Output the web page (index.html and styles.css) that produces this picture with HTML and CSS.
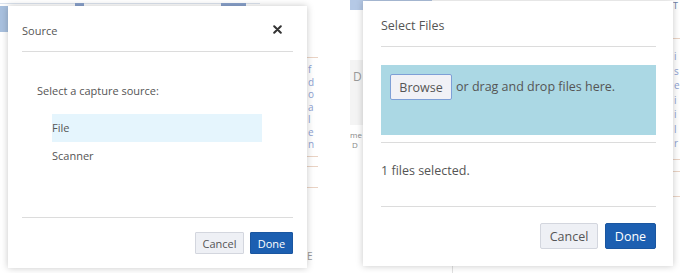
FILE: index.html
```html
<!DOCTYPE html>
<html>
<head>
<meta charset="utf-8">
<link rel="stylesheet" href="styles.css">
</head>
<body>
<div class="stage">
  <section class="screen screen-a">
    <div class="bg-topline"><span class="tab tab-1"></span><span class="tab tab-2"></span></div>
    <div class="bg-sidebar"></div>
    <div class="bg-right">
      <div class="rule"></div>
      <div class="frag">f<br>d<br>o<br>a<br>l<br>e<br>n</div>
      <div class="rule"></div>
      <div class="rule gap"></div>
      <div class="rule gap2"></div>
      <div class="frag-e">E</div>
    </div>

    <div class="dialog dlg-source">
      <div class="dlg-head">
        <span class="dlg-title">Source</span>
        <span class="close">
          <svg width="9" height="9" viewBox="0 0 9 9"><path d="M1.2 1.2 L7.8 7.8 M7.8 1.2 L1.2 7.8" stroke="#333" stroke-width="2" stroke-linecap="round"/></svg>
        </span>
      </div>
      <div class="dlg-body">
        <p class="prompt">Select a capture source:</p>
        <ul class="choices">
          <li class="choice selected">File</li>
          <li class="choice">Scanner</li>
        </ul>
      </div>
      <div class="dlg-foot">
        <button class="btn btn-cancel">Cancel</button>
        <button class="btn btn-done">Done</button>
      </div>
    </div>
  </section>

  <section class="screen screen-b">
    <div class="bg-topbar"></div>
    <div class="bg-left">
      <div class="box"><span>D</span></div>
      <div class="small">me<br>&nbsp;D</div>
    </div>
    <div class="bg-right2">
      <div class="t">T</div>
      <div class="rule"></div>
      <div class="frag">i<br>s<br>e<br>i<br>i<br>l<br>r</div>
      <div class="rule"></div>
      <div class="rule gap"></div>
      <div class="rule gap3"></div>
    </div>
    <div class="bg-vline"></div>

    <div class="dialog dlg-files">
      <div class="files-head">Select Files</div>
      <div class="files-body">
        <div class="dropzone">
          <button class="browse">Browse</button>
          <span class="drop-text">or drag and drop files here.</span>
        </div>
      </div>
      <div class="files-status">1 files selected.</div>
      <div class="files-foot">
        <button class="btn2 btn2-cancel">Cancel</button>
        <button class="btn2 btn2-done">Done</button>
      </div>
    </div>
  </section>
</div>
</body>
</html>
```

FILE: styles.css
```css
* { box-sizing: border-box; }
html, body { margin: 0; padding: 0; background: #fff; }
body { font-family: "Open Sans", "Noto Sans", sans-serif; color: #555; }

.stage { display: flex; width: 680px; height: 273px; overflow: hidden; gap: 30px; }

.screen { position: relative; height: 273px; }
.screen-a { width: 318px; }
.screen-b { width: 332px; }

/* ---------- left screen background ---------- */
.bg-topline { position: absolute; left: 0; top: 3px; width: 260px; height: 3px; border-top: 1px solid #dbe3ee; }
.tab { position: absolute; top: -1px; height: 3px; background: #8aa2cc; }
.tab-1 { left: 75px; width: 9px; }
.tab-2 { left: 221px; width: 25px; }
.bg-sidebar { position: absolute; left: 0; top: 6px; width: 8px; height: 26px; background: #a8c0de; }
.bg-right { position: absolute; left: 307px; top: 57px; width: 11px; display: flex; flex-direction: column; }
.bg-right .rule { height: 1px; background: #ead3c4; }
.bg-right .gap { margin-top: 9px; }
.bg-right .gap2 { margin-top: 20px; }
.frag { font-size: 10px; line-height: 12.5px; color: #8fa3d3; padding: 5px 0 5px 1px; white-space: nowrap; }
.frag-e { margin-top: 62px; font-size: 10px; color: #999; line-height: 12px; }

/* ---------- dialogs ---------- */
.dialog { position: absolute; background: #fff; box-shadow: 0 0 7px rgba(0,0,0,0.22); }

.dlg-source { left: 8px; top: 6px; width: 299px; height: 262px; display: flex; flex-direction: column; }
.dlg-head { margin: 0 14px; height: 46px; padding-top: 4px; border-bottom: 1px solid #dcdcdc; display: flex; align-items: center; justify-content: space-between; }
.dlg-title { font-size: 11px; color: #555; }
.close { display: flex; margin-right: 11px; margin-top: -2px; }
.dlg-body { flex: 1; padding: 31px 0 0 29px; }
.prompt { margin: 0; font-size: 11px; line-height: 16px; color: #555; }
.choices { list-style: none; margin: 15px 0 0 15px; padding: 0; width: 210px; }
.choice { height: 28px; line-height: 28px; font-size: 11px; color: #555; }
.choice.selected { background: #e5f5fd; }
.dlg-foot { margin: 0 14px; border-top: 1px solid #dcdcdc; height: 51px; display: flex; justify-content: flex-end; align-items: flex-start; gap: 6px; padding-top: 14px; }
.btn { font-family: inherit; font-size: 11px; height: 22px; padding: 0; border-radius: 1px; cursor: pointer; }
.btn-cancel { width: 49px; background: #eef0f5; border: 1px solid #d3d6de; color: #555; }
.btn-done { width: 43px; background: #1c5fb1; border: 1px solid #1a56a0; color: #fff; }

/* ---------- right screen background ---------- */
.bg-topbar { position: absolute; left: 2px; top: 0; width: 82px; height: 10px; background: #b5c9e6; }
.bg-left { position: absolute; left: 2px; top: 60px; width: 14px; }
.bg-left .box { height: 65px; background: #f4f4f4; padding: 8px 0 0 3px; font-size: 12px; color: #999; }
.bg-left .small { margin-top: 5px; font-size: 8px; line-height: 10px; color: #888; }
.bg-right2 { position: absolute; left: 325px; top: 0; width: 7px; display: flex; flex-direction: column; }
.bg-right2 .t { font-size: 9px; color: #6b7fa8; line-height: 11px; margin-bottom: 27px; }
.bg-right2 .rule { height: 1px; background: #ead3c4; }
.bg-right2 .frag { font-size: 10px; line-height: 14.5px; padding: 10px 0 8px 1px; }
.bg-right2 .gap { margin-top: 11px; }
.bg-right2 .gap3 { margin-top: 24px; }
.bg-vline { position: absolute; left: 104px; top: 262px; width: 1px; height: 11px; background: #e0e0e0; }

.dlg-files { left: 15px; top: 1px; width: 310px; height: 265px; padding: 0 17px 0 18px; display: flex; flex-direction: column; }
.files-head { height: 46px; border-bottom: 1px solid #dcdcdc; display: flex; align-items: center; font-size: 12.5px; color: #555; padding-top: 4px; }
.files-body { padding: 18px 0 7px; border-bottom: 1px solid #dcdcdc; }
.dropzone { height: 70px; background: #abd8e4; padding: 9px 0 0 9px; display: flex; align-items: flex-start; gap: 4px; }
.browse { font-family: inherit; font-size: 12.5px; color: #555; height: 26px; width: 62px; padding: 0; background: #f1f1f6; border: 1px solid #7e9fd6; border-radius: 2px; }
.drop-text { font-size: 12.5px; line-height: 26px; color: #555; }
.files-status { height: 64px; display: flex; align-items: center; font-size: 12.5px; color: #555; border-bottom: 1px solid #dcdcdc; padding-bottom: 8px; }
.files-foot { display: flex; justify-content: flex-end; gap: 7px; padding-top: 16px; }
.btn2 { font-family: inherit; font-size: 12.5px; height: 26px; padding: 0; border-radius: 2px; }
.btn2-cancel { width: 58px; background: #eef0f5; border: 1px solid #d3d6de; color: #555; }
.btn2-done { width: 51px; background: #1c5fb1; border: 1px solid #1a56a0; color: #fff; }
```
